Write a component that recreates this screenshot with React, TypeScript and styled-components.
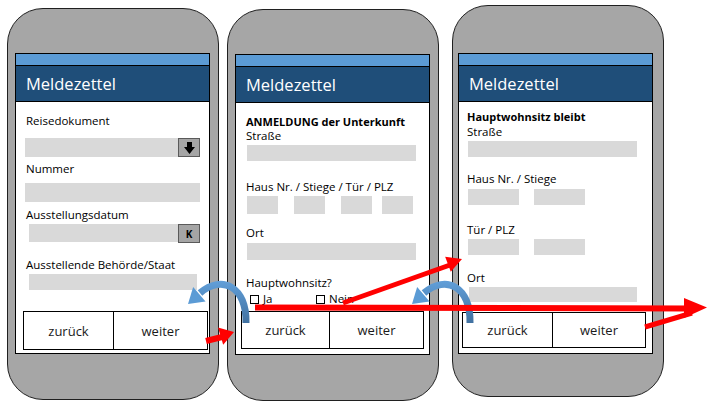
import React from "react";
import styled, { createGlobalStyle } from "styled-components";

const GlobalStyle = createGlobalStyle`
  html, body { margin: 0; padding: 0; background: #ffffff; }
  body { font-family: "Open Sans", "Noto Sans", "DejaVu Sans", sans-serif; color: #000; }
  *, *::before, *::after { box-sizing: border-box; }
`;

const Canvas = styled.div`
  position: relative;
  width: 710px;
  height: 407px;
  overflow: hidden;
  background: #fff;
`;

const PhoneRow = styled.div`
  display: flex;
  align-items: flex-start;
`;

const Phone = styled.div<{ $x: number; $y: number; $sx: number; $sy: number }>`
  flex: none;
  width: 212px;
  height: 392px;
  margin-left: ${(p) => p.$x}px;
  margin-top: ${(p) => p.$y}px;
  padding-left: ${(p) => p.$sx}px;
  padding-top: ${(p) => p.$sy}px;
  background: #a6a6a6;
  border: 1px solid #202020;
  border-radius: 36px;
`;

const Screen = styled.div`
  width: 195px;
  height: 301px;
  background: #fff;
  border: 1px solid #000;
  display: flex;
  flex-direction: column;
`;

const StatusBar = styled.div`
  flex: none;
  height: 12px;
  background: #5b9bd5;
  border-bottom: 1px solid #000;
`;

const TitleBar = styled.div`
  flex: none;
  height: 36px;
  background: #1f4e79;
  border-bottom: 1px solid #000;
  display: flex;
  align-items: center;
  padding-left: 10px;
  color: #fff;
  font-size: 16.5px;
`;

const Body = styled.div<{ $pad: number }>`
  flex: 1;
  display: flex;
  flex-direction: column;
  align-items: flex-start;
  padding-left: ${(p) => p.$pad}px;
`;

const Label = styled.div<{ $mt: number; $bold?: boolean }>`
  margin-top: ${(p) => p.$mt}px;
  height: 14px;
  font-size: ${(p) => (p.$bold ? 11 : 11.5)}px;
  line-height: 14px;
  font-weight: ${(p) => (p.$bold ? 700 : 400)};
  white-space: nowrap;
  color: #000;
`;

const Field = styled.div<{ $w?: number; $h: number; $mt?: number; $ml?: number }>`
  flex: ${(p) => (p.$w ? "none" : "1")};
  width: ${(p) => (p.$w ? `${p.$w}px` : "auto")};
  height: ${(p) => p.$h}px;
  margin-top: ${(p) => p.$mt ?? 0}px;
  margin-left: ${(p) => p.$ml ?? 0}px;
  background: #d9d9d9;
`;

const FieldRow = styled.div<{ $mt: number; $ml: number; $w?: number }>`
  display: flex;
  align-items: flex-start;
  margin-top: ${(p) => p.$mt}px;
  margin-left: ${(p) => p.$ml}px;
  width: ${(p) => (p.$w ? `${p.$w}px` : "auto")};
`;

const SideButton = styled.div<{ $h: number }>`
  flex: none;
  width: 22px;
  height: ${(p) => p.$h}px;
  background: #a5a5a5;
  border: 1px solid #5a5a5a;
  display: flex;
  align-items: center;
  justify-content: center;
  font-size: 10px;
  font-weight: 700;
  color: #000;
`;

const CheckRow = styled.div`
  display: flex;
  align-items: center;
  height: 14px;
  margin-top: 2px;
  margin-left: 4px;
  font-size: 11.5px;
  line-height: 14px;
`;

const CheckItem = styled.div<{ $w?: number }>`
  display: flex;
  align-items: center;
  gap: 4px;
  width: ${(p) => (p.$w ? `${p.$w}px` : "auto")};
`;

const Box = styled.span`
  width: 9px;
  height: 9px;
  border: 1px solid #000;
  background: #fff;
`;

const NavRow = styled.div<{ $ml: number; $mb: number; $h: number }>`
  flex: none;
  display: flex;
  height: ${(p) => p.$h}px;
  margin-left: ${(p) => p.$ml}px;
  margin-bottom: ${(p) => p.$mb}px;
`;

const NavButton = styled.div<{ $w: number; $first?: boolean }>`
  width: ${(p) => p.$w}px;
  height: 100%;
  border: 1px solid #000;
  border-left: ${(p) => (p.$first ? "1px solid #000" : "none")};
  display: flex;
  align-items: center;
  justify-content: center;
  font-size: 13px;
  color: #1a1a1a;
  background: #fff;
`;

const Overlay = styled.svg`
  position: absolute;
  left: 0;
  top: 0;
  width: 710px;
  height: 407px;
  pointer-events: none;
`;

function head(tx: number, ty: number, dx: number, dy: number, len: number, half: number) {
  const l = Math.hypot(dx, dy);
  const ux = dx / l;
  const uy = dy / l;
  const bx = tx - ux * len;
  const by = ty - uy * len;
  const nx = -uy;
  const ny = ux;
  return `${tx},${ty} ${bx + nx * half},${by + ny * half} ${bx - nx * half},${by - ny * half}`;
}

const DownArrow = () => (
  <svg width="11" height="12" viewBox="0 0 11 12">
    <polygon points="3,0 8,0 8,5 11,5 5.5,12 0,5 3,5" fill="#000" />
  </svg>
);

const Nav = ({ ml, mb, h, w1, w2 }: { ml: number; mb: number; h: number; w1: number; w2: number }) => (
  <NavRow $ml={ml} $mb={mb} $h={h}>
    <NavButton $w={w1} $first>zurück</NavButton>
    <NavButton $w={w2}>weiter</NavButton>
  </NavRow>
);

const Header = () => (
  <>
    <StatusBar />
    <TitleBar>Meldezettel</TitleBar>
  </>
);

export default function App() {
  const blueArc = "M 246 323 C 247 287, 222 274, 200 293";
  return (
    <>
      <GlobalStyle />
      <Canvas>
        <PhoneRow>
          <Phone $x={7} $y={8} $sx={7} $sy={44}>
            <Screen>
              <Header />
              <Body $pad={10}>
                <Label $mt={12}>Reisedokument</Label>
                <FieldRow $mt={10} $ml={-1} $w={175}>
                  <Field $h={19} />
                  <SideButton $h={19}>
                    <DownArrow />
                  </SideButton>
                </FieldRow>
                <Label $mt={5}>Nummer</Label>
                <Field $w={175} $h={19} $mt={7} $ml={-1} />
                <Label $mt={6}>Ausstellungsdatum</Label>
                <FieldRow $mt={2} $ml={3} $w={171}>
                  <Field $h={18} />
                  <SideButton $h={19}>K</SideButton>
                </FieldRow>
                <Label $mt={15}>Ausstellende Behörde/Staat</Label>
                <Field $w={168} $h={16} $mt={2} $ml={3} />
              </Body>
              <Nav ml={7} mb={3} h={39} w1={91} w2={94} />
            </Screen>
          </Phone>

          <Phone $x={8} $y={9} $sx={7} $sy={44}>
            <Screen>
              <Header />
              <Body $pad={10}>
                <Label $mt={12} $bold>
                  ANMELDUNG der Unterkunft
                </Label>
                <Label $mt={0}>Straße</Label>
                <Field $w={169} $h={16} $mt={2} $ml={1} />
                <Label $mt={19}>Haus Nr. / Stiege / Tür / PLZ</Label>
                <FieldRow $mt={2} $ml={1}>
                  <Field $w={31} $h={18} />
                  <Field $w={31} $h={18} $ml={16} />
                  <Field $w={31} $h={18} $ml={16} />
                  <Field $w={31} $h={18} $ml={10} />
                </FieldRow>
                <Label $mt={12}>Ort</Label>
                <Field $w={169} $h={17} $mt={3} $ml={1} />
                <Label $mt={16}>Hauptwohnsitz?</Label>
                <CheckRow>
                  <CheckItem $w={66}>
                    <Box />
                    <span>Ja</span>
                  </CheckItem>
                  <CheckItem>
                    <Box />
                    <span>Nein</span>
                  </CheckItem>
                </CheckRow>
              </Body>
              <Nav ml={5} mb={5} h={38} w1={89} w2={94} />
            </Screen>
          </Phone>

          <Phone $x={13} $y={5} $sx={5} $sy={47}>
            <Screen>
              <Header />
              <Body $pad={8}>
                <Label $mt={8} $bold>
                  Hauptwohnsitz bleibt
                </Label>
                <Label $mt={1}>Straße</Label>
                <Field $w={169} $h={16} $mt={2} $ml={1} />
                <Label $mt={15}>Haus Nr. / Stiege</Label>
                <FieldRow $mt={3} $ml={1}>
                  <Field $w={51} $h={16} />
                  <Field $w={51} $h={16} $ml={15} />
                </FieldRow>
                <Label $mt={18}>Tür / PLZ</Label>
                <FieldRow $mt={2} $ml={1}>
                  <Field $w={51} $h={16} />
                  <Field $w={51} $h={16} $ml={15} />
                </FieldRow>
                <Label $mt={16}>Ort</Label>
                <Field $w={168} $h={15} $mt={2} $ml={2} />
              </Body>
              <Nav ml={3} mb={5} h={36} w1={91} w2={93} />
            </Screen>
          </Phone>
        </PhoneRow>

        <Overlay viewBox="0 0 710 407">
          <defs>
            <linearGradient id="arcBlue" gradientUnits="userSpaceOnUse" x1="0" y1="280" x2="0" y2="325">
              <stop offset="0" stopColor="#62a0da" />
              <stop offset="1" stopColor="#3f6f9e" />
            </linearGradient>
          </defs>

          <g>
            <path d={blueArc} fill="none" stroke="url(#arcBlue)" strokeWidth={7} />
            <polygon points={head(188, 304, -22, 19, 15, 9.5)} fill="#5b9bd5" />
          </g>
          <g transform="translate(224 0)">
            <path d={blueArc} fill="none" stroke="url(#arcBlue)" strokeWidth={7} />
            <polygon points={head(188, 304, -22, 19, 15, 9.5)} fill="#5b9bd5" />
          </g>

          <g fill="#ff0000" stroke="#ff0000">
            <line x1={206} y1={341} x2={222} y2={337} strokeWidth={6} />
            <polygon stroke="none" points={head(234, 332, 1, -0.3, 14, 9)} />

            <line x1={343} y1={303} x2={450} y2={265} strokeWidth={5} />
            <polygon stroke="none" points={head(462, 259, 117, -44, 15, 8)} />

            <line x1={255} y1={307.5} x2={690} y2={308.5} strokeWidth={6} />
            <polygon stroke="none" points="684,298 707,307.5 684,318" />
            <line x1={645} y1={327} x2={692} y2={313} strokeWidth={5} />
          </g>
        </Overlay>
      </Canvas>
    </>
  );
}
